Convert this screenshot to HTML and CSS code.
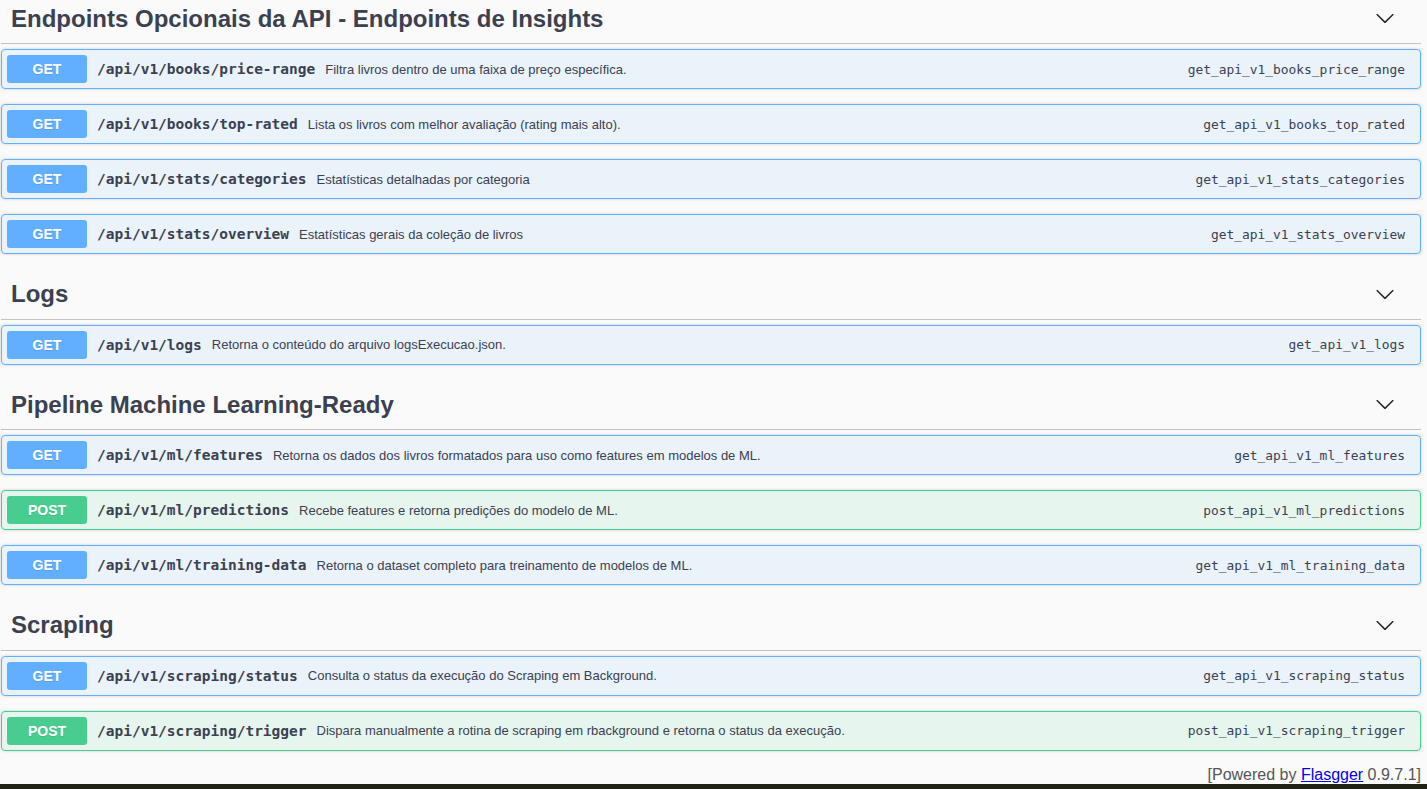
FILE: index.html
```html
<!DOCTYPE html>
<html lang="pt">
<head>
<meta charset="utf-8">
<title>Swagger UI</title>
<link rel="stylesheet" href="styles.css">
</head>
<body>
<div class="wrapper">
  <section class="tag-section">
    <div class="tag-header">
      <h3 class="tag-title">Endpoints Opcionais da API - Endpoints de Insights</h3>
      <svg class="chevron" width="20" height="20" viewBox="0 0 20 20"><path d="M17.418 6.109c.272-.268.709-.268.979 0s.271.701 0 .969l-7.908 7.83c-.27.268-.707.268-.979 0l-7.908-7.830c-.27-.268-.27-.701 0-.969.271-.268.709-.268.979 0L10 13.25l7.418-7.141z"/></svg>
    </div>
    <div class="opblock get"><span class="method">GET</span><span class="path">/api/v1/books/price-range</span><span class="desc">Filtra livros dentro de uma faixa de preço específica.</span><span class="opid">get_api_v1_books_price_range</span></div>
    <div class="opblock get"><span class="method">GET</span><span class="path">/api/v1/books/top-rated</span><span class="desc">Lista os livros com melhor avaliação (rating mais alto).</span><span class="opid">get_api_v1_books_top_rated</span></div>
    <div class="opblock get"><span class="method">GET</span><span class="path">/api/v1/stats/categories</span><span class="desc">Estatísticas detalhadas por categoria</span><span class="opid">get_api_v1_stats_categories</span></div>
    <div class="opblock get"><span class="method">GET</span><span class="path">/api/v1/stats/overview</span><span class="desc">Estatísticas gerais da coleção de livros</span><span class="opid">get_api_v1_stats_overview</span></div>
  </section>
  <section class="tag-section">
    <div class="tag-header">
      <h3 class="tag-title">Logs</h3>
      <svg class="chevron" width="20" height="20" viewBox="0 0 20 20"><path d="M17.418 6.109c.272-.268.709-.268.979 0s.271.701 0 .969l-7.908 7.83c-.27.268-.707.268-.979 0l-7.908-7.83c-.27-.268-.27-.701 0-.969.271-.268.709-.268.979 0L10 13.25l7.418-7.141z"/></svg>
    </div>
    <div class="opblock get"><span class="method">GET</span><span class="path">/api/v1/logs</span><span class="desc">Retorna o conteúdo do arquivo logsExecucao.json.</span><span class="opid">get_api_v1_logs</span></div>
  </section>
  <section class="tag-section">
    <div class="tag-header">
      <h3 class="tag-title">Pipeline Machine Learning-Ready</h3>
      <svg class="chevron" width="20" height="20" viewBox="0 0 20 20"><path d="M17.418 6.109c.272-.268.709-.268.979 0s.271.701 0 .969l-7.908 7.83c-.27.268-.707.268-.979 0l-7.908-7.83c-.27-.268-.27-.701 0-.969.271-.268.709-.268.979 0L10 13.25l7.418-7.141z"/></svg>
    </div>
    <div class="opblock get"><span class="method">GET</span><span class="path">/api/v1/ml/features</span><span class="desc">Retorna os dados dos livros formatados para uso como features em modelos de ML.</span><span class="opid">get_api_v1_ml_features</span></div>
    <div class="opblock post"><span class="method">POST</span><span class="path">/api/v1/ml/predictions</span><span class="desc">Recebe features e retorna predições do modelo de ML.</span><span class="opid">post_api_v1_ml_predictions</span></div>
    <div class="opblock get"><span class="method">GET</span><span class="path">/api/v1/ml/training-data</span><span class="desc">Retorna o dataset completo para treinamento de modelos de ML.</span><span class="opid">get_api_v1_ml_training_data</span></div>
  </section>
  <section class="tag-section">
    <div class="tag-header">
      <h3 class="tag-title">Scraping</h3>
      <svg class="chevron" width="20" height="20" viewBox="0 0 20 20"><path d="M17.418 6.109c.272-.268.709-.268.979 0s.271.701 0 .969l-7.908 7.83c-.27.268-.707.268-.979 0l-7.908-7.83c-.27-.268-.27-.701 0-.969.271-.268.709-.268.979 0L10 13.25l7.418-7.141z"/></svg>
    </div>
    <div class="opblock get"><span class="method">GET</span><span class="path">/api/v1/scraping/status</span><span class="desc">Consulta o status da execução do Scraping em Background.</span><span class="opid">get_api_v1_scraping_status</span></div>
    <div class="opblock post"><span class="method">POST</span><span class="path">/api/v1/scraping/trigger</span><span class="desc">Dispara manualmente a rotina de scraping em rbackground e retorna o status da execução.</span><span class="opid">post_api_v1_scraping_trigger</span></div>
  </section>
  <div class="powered">[Powered by <a href="#">Flasgger</a> 0.9.7.1]</div>
</div>
<div class="taskbar"></div>
</body>
</html>
```
FILE: styles.css
```css
html, body {
  margin: 0;
  padding: 0;
  background: #fafafa;
  overflow: hidden;
}
body {
  font-family: "Liberation Sans", Arial, sans-serif;
  color: #3b4151;
}
.wrapper {
  margin-top: -6.5px;
  padding: 0 6px 0 1px;
}
.tag-header {
  display: flex;
  align-items: center;
  justify-content: space-between;
  padding: 10px 26px 10px 10px;
  border-bottom: 1px solid rgba(59, 65, 81, 0.3);
  margin-bottom: 5px;
}
.tag-title {
  margin: 0;
  font-size: 24px;
  line-height: 29.5px;
  font-weight: 700;
  color: #3b4151;
}
.chevron {
  fill: #222;
  display: block;
}
.opblock {
  display: flex;
  align-items: center;
  padding: 5px;
  margin-bottom: 15px;
  border: 1px solid;
  border-radius: 4px;
  box-shadow: 0 0 3px rgba(0, 0, 0, 0.19);
}
.opblock.get {
  background: rgba(97, 175, 254, 0.1);
  border-color: #61affe;
}
.opblock.post {
  background: rgba(73, 204, 144, 0.1);
  border-color: #49cc90;
}
.method {
  width: 80px;
  height: 28px;
  line-height: 28px;
  text-align: center;
  font-size: 14px;
  font-weight: 700;
  color: #fff;
  border-radius: 3px;
  text-shadow: 0 1px 0 rgba(0, 0, 0, 0.1);
  flex-shrink: 0;
}
.get .method { background: #61affe; }
.post .method { background: #49cc90; }
.path {
  font-family: "DejaVu Sans Mono", monospace;
  font-size: 14.5px;
  font-weight: 700;
  padding: 0 10px;
  color: #3b4151;
  white-space: nowrap;
}
.desc {
  flex: 1;
  font-size: 13px;
  color: #3b4151;
  white-space: nowrap;
}
.opid {
  font-family: "DejaVu Sans Mono", monospace;
  font-size: 12.9px;
  color: #3b4151;
  padding: 0 10px;
  white-space: nowrap;
}
.powered {
  text-align: right;
  font-size: 16px;
  line-height: 18px;
  color: #555;
}
.powered a {
  color: #0000ee;
  text-decoration: underline;
}
.taskbar {
  height: 30px;
  background: #1f2214;
}
```
